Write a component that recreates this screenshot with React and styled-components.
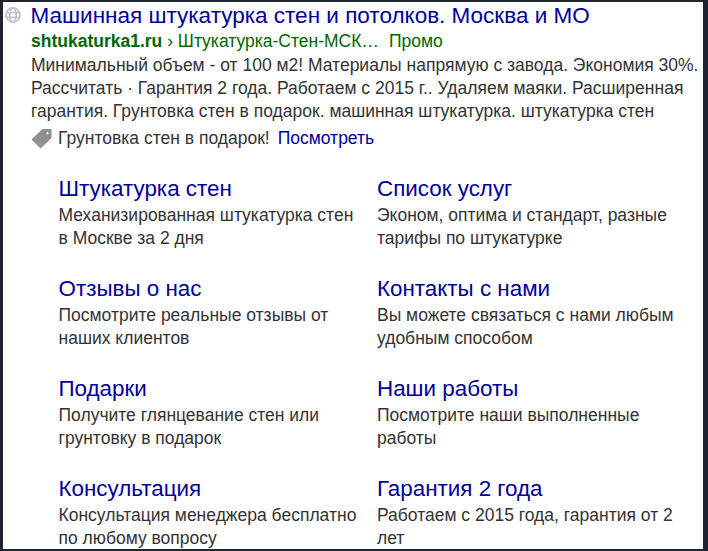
import React from "react";
import styled, { createGlobalStyle } from "styled-components";

const Global = createGlobalStyle`
  html, body { margin: 0; padding: 0; background: #1f2430; }
  body { font-family: "Liberation Sans", Arial, sans-serif; }
`;
const Frame = styled.div`
  width: 708px; height: 551px; box-sizing: border-box; overflow: hidden;
  padding: 2px 5px 2px 3px; background: #1f2430;
`;
const Card = styled.div`
  height: 547px; background: #fff; overflow: hidden; box-sizing: border-box;
  padding: 0 0 0 2px;
`;
const TitleRow = styled.div`display: flex; align-items: flex-start; height: 28px;`;
const Globe = styled.svg`width: 16px; height: 16px; margin: 5px 10px 0 0; flex: none;`;
const Title = styled.a`font-size: 22.5px; line-height: 28px; color: #000099; white-space: nowrap; margin-left: -0.5px;`;
const UrlRow = styled.div`
  display: flex; margin-left: 26px; font-size: 17.5px; line-height: 23px; color: #006600; white-space: nowrap;
`;
const Domain = styled.b`font-weight: 700;`;
const Promo = styled.span`margin-left: 10px;`;
const Body = styled.div`
  margin: 1px 0 0 26px; font-size: 17.5px; line-height: 23px; color: #333; white-space: nowrap;
`;
const Callout = styled.div`
  display: flex; align-items: center; margin: 4px 0 0 26px; font-size: 17.5px; line-height: 23px; color: #333;
`;
const Tag = styled.svg`width: 21px; height: 21px; margin-right: 6px; flex: none;`;
const Link = styled.a`color: #000099; margin-left: 8px;`;
const Grid = styled.div`
  display: grid; grid-template-columns: 318.5px 318.5px; margin: 25px 0 0 53.5px; row-gap: 0;
`;
const Site = styled.div`height: 100px;`;
const SiteTitle = styled.a`display: block; font-size: 22.4px; line-height: 28px; color: #000099; white-space: nowrap;`;
const SiteText = styled.div`font-size: 17.5px; line-height: 23px; color: #333; white-space: pre-line; margin-top: 1px;`;

const sites = [
  ["Штукатурка стен", "Механизированная штукатурка стен\nв Москве за 2 дня"],
  ["Список услуг", "Эконом, оптима и стандарт, разные\nтарифы по штукатурке"],
  ["Отзывы о нас", "Посмотрите реальные отзывы от\nнаших клиентов"],
  ["Контакты с нами", "Вы можете связаться с нами любым\nудобным способом"],
  ["Подарки", "Получите глянцевание стен или\nгрунтовку в подарок"],
  ["Наши работы", "Посмотрите наши выполненные\nработы"],
  ["Консультация", "Консультация менеджера бесплатно\nпо любому вопросу"],
  ["Гарантия 2 года", "Работаем с 2015 года, гарантия от 2\nлет"],
];

export default function App() {
  return (
    <Frame>
      <Global />
      <Card>
        <TitleRow>
          <Globe viewBox="0 0 16 16" fill="none" stroke="#bfc3cd" strokeWidth="1.7">
            <circle cx="8" cy="8" r="7.1" />
            <ellipse cx="8" cy="8" rx="3.2" ry="7.1" />
            <path d="M1 5.7h14M1 10.3h14" />
          </Globe>
          <Title>Машинная штукатурка стен и потолков. Москва и МО</Title>
        </TitleRow>
        <UrlRow>
          <Domain>shtukaturka1.ru</Domain>&nbsp;› Штукатурка-Стен-МСК…<Promo>Промо</Promo>
        </UrlRow>
        <Body>
          Минимальный объем - от 100 м2! Материалы напрямую с завода. Экономия 30%.<br />
          Рассчитать · Гарантия 2 года. Работаем с 2015 г.. Удаляем маяки. Расширенная<br />
          гарантия. Грунтовка стен в подарок. машинная штукатурка. штукатурка стен
        </Body>
        <Callout>
          <Tag viewBox="0 0 21 21">
            <path fill="#8f8f8f" stroke="#8f8f8f" strokeWidth="1" strokeLinejoin="round" fillRule="evenodd" d="M1 11.5 11.5 1.5H20V10L9.5 20ZM16.5 3.8a1.5 1.5 0 1 0 .01 0Z" />
          </Tag>
          Грунтовка стен в подарок!<Link>Посмотреть</Link>
        </Callout>
        <Grid>
          {sites.map(([t, d]) => (
            <Site key={t}>
              <SiteTitle>{t}</SiteTitle>
              <SiteText>{d}</SiteText>
            </Site>
          ))}
        </Grid>
      </Card>
    </Frame>
  );
}
